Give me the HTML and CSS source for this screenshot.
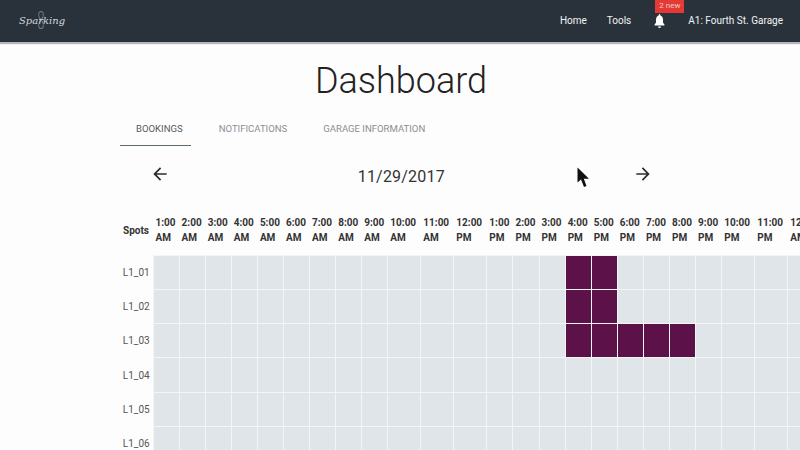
FILE: index.html
```html
<!DOCTYPE html>
<html lang="en">
<head>
  <meta charset="UTF-8" />
  <meta name="viewport" content="width=device-width, initial-scale=1" />
  <title>Sparking Dashboard</title>
  <link rel="stylesheet" href="styles.css">
</head>
<body>

  <nav class="navbar">
    <a class="logo">
      <svg class="logo-loop" width="10" height="20" viewBox="0 0 16 26" fill="none" stroke="#6f7981" stroke-width="1.500" preserveAspectRatio="none">
        <path d="M8 13C3 9 3 2 8 2s5 7 0 11c-5 4-5 11 0 11s5-7 0-11z" />
      </svg>
      <span class="logo-text">Sparking</span>
    </a>
    <div class="nav-links">
      <a class="nav-link">Home</a>
      <a class="nav-link">Tools</a>
      <a class="bell">
        <span class="badge">2 new</span>
        <svg width="13" height="14" viewBox="0 0 24 24" fill="#fff" preserveAspectRatio="none">
          <path d="M12 24c1.500 0 2.800-1.200 2.800-2.600H9.200C9.200 22.800 10.500 24 12 24zm9-6.500-2.500-2.500V9.500c0-3.700-2-6.400-5-7.100V1.500C13.500.6 12.800 0 12 0s-1.500.6-1.500 1.500v.9c-3 .7-5 3.400-5 7.100V15L3 17.500V19.500h18v-2z" />
        </svg>
      </a>
      <a class="nav-link">A1: Fourth St. Garage</a>
    </div>
  </nav>

  <main class="content">
    <h1>Dashboard</h1>

    <div class="tabs">
      <a class="tab active">BOOKINGS</a>
      <a class="tab">NOTIFICATIONS</a>
      <a class="tab">GARAGE INFORMATION</a>
    </div>

    <div class="date-row">
      <svg class="arrow" width="20" height="20" viewBox="0 0 24 24" fill="#2b2b2b"><path d="M20 11H7.830l5.590-5.590L12 4l-8 8 8 8 1.410-1.410L7.830 13H20z" /></svg>
      <span class="date">11/29/2017</span>
      <svg class="arrow" width="20" height="20" viewBox="0 0 24 24" fill="#2b2b2b"><path d="M4 11h12.170l-5.590-5.590L12 4l8 8-8 8-1.410-1.410L16.170 13H4z" /></svg>
    </div>

    <div class="schedule-wrap">
    <table class="schedule">
      <thead>
        <tr>
          <th class="spot">Spots</th>
          <th>1:00<br>AM</th><th>2:00<br>AM</th><th>3:00<br>AM</th><th>4:00<br>AM</th><th>5:00<br>AM</th><th>6:00<br>AM</th>
          <th>7:00<br>AM</th><th>8:00<br>AM</th><th>9:00<br>AM</th><th class="wide">10:00<br>AM</th><th class="wide">11:00<br>AM</th><th class="wide">12:00<br>PM</th>
          <th>1:00<br>PM</th><th>2:00<br>PM</th><th>3:00<br>PM</th><th>4:00<br>PM</th><th>5:00<br>PM</th><th>6:00<br>PM</th>
          <th>7:00<br>PM</th><th>8:00<br>PM</th><th>9:00<br>PM</th><th class="wide">10:00<br>PM</th><th class="wide">11:00<br>PM</th><th class="wide">12:00<br>AM</th>
        </tr>
      </thead>
      <tbody>
        <tr>
          <td class="spot">L1_01</td>
          <td></td><td></td><td></td><td></td><td></td><td></td><td></td><td></td><td></td><td></td><td></td><td></td>
          <td></td><td></td><td></td><td class="booked"></td><td class="booked"></td><td></td><td></td><td></td><td></td><td></td><td></td><td></td>
        </tr>
        <tr>
          <td class="spot">L1_02</td>
          <td></td><td></td><td></td><td></td><td></td><td></td><td></td><td></td><td></td><td></td><td></td><td></td>
          <td></td><td></td><td></td><td class="booked"></td><td class="booked"></td><td></td><td></td><td></td><td></td><td></td><td></td><td></td>
        </tr>
        <tr>
          <td class="spot">L1_03</td>
          <td></td><td></td><td></td><td></td><td></td><td></td><td></td><td></td><td></td><td></td><td></td><td></td>
          <td></td><td></td><td></td><td class="booked"></td><td class="booked"></td><td class="booked"></td><td class="booked"></td><td class="booked"></td><td></td><td></td><td></td><td></td>
        </tr>
        <tr>
          <td class="spot">L1_04</td>
          <td></td><td></td><td></td><td></td><td></td><td></td><td></td><td></td><td></td><td></td><td></td><td></td>
          <td></td><td></td><td></td><td></td><td></td><td></td><td></td><td></td><td></td><td></td><td></td><td></td>
        </tr>
        <tr>
          <td class="spot">L1_05</td>
          <td></td><td></td><td></td><td></td><td></td><td></td><td></td><td></td><td></td><td></td><td></td><td></td>
          <td></td><td></td><td></td><td></td><td></td><td></td><td></td><td></td><td></td><td></td><td></td><td></td>
        </tr>
        <tr>
          <td class="spot">L1_06</td>
          <td></td><td></td><td></td><td></td><td></td><td></td><td></td><td></td><td></td><td></td><td></td><td></td>
          <td></td><td></td><td></td><td></td><td></td><td></td><td></td><td></td><td></td><td></td><td></td><td></td>
        </tr>
      </tbody>
    </table>
    </div>
  </main>

  <svg class="cursor" width="13" height="21" viewBox="0 0 13 21" fill="#111"><path d="M0.500 0.500V15.500L4 12.500L7 20L9.500 19L6.800 11.800H12z" /></svg>

</body>
</html>
```

FILE: styles.css
```css
html, body {
  height: 100%;
}
body {
  margin: 0;
  overflow: hidden;
  background: #fefdfe;
  color: #2b2b2b;
  font-family: Roboto, sans-serif;
}
.navbar {
  height: 42px;
  display: flex;
  align-items: center;
  justify-content: space-between;
  padding: 0 17px 0 19px;
  background: #29323b;
  box-shadow: 0 2px 1px #b4b6ba;
}
.logo {
  position: relative;
  display: flex;
  align-items: center;
}
.logo-loop {
  position: absolute;
  left: 17px;
  top: -5px;
}
.logo-text {
  position: relative;
  margin-bottom: 2px;
  font-family: "DejaVu Serif", serif;
  font-style: italic;
  font-size: 10px;
  color: #d4d8db;
}
.nav-links {
  display: flex;
  align-items: center;
  color: #f2f3f4;
  font-size: 10px;
}
.nav-link {
  margin-left: 20px;
  margin-bottom: 2px;
}
.bell {
  position: relative;
  display: flex;
  margin-left: 22px;
  margin-right: 2px;
}
.badge {
  position: absolute;
  left: 2px;
  top: -15px;
  padding: 0 4px;
  height: 14px;
  line-height: 13px;
  font-size: 8px;
  white-space: nowrap;
  color: #f6c9c4;
  background: #e53935;
}
.content {
  padding-left: 120px;
}
h1 {
  margin: 17px 0 0;
  padding-right: 118px;
  text-align: center;
  font-size: 36px;
  line-height: 44px;
  font-weight: 300;
  color: #222;
}
.tabs {
  display: flex;
  gap: 12px;
  margin-top: 18px;
}
.tab {
  padding: 0 8px 8px 16px;
  line-height: 16px;
  font-size: 9.550px;
  font-weight: 400;
  color: #8b8e92;
}
.tab.active {
  color: #555a60;
  border-bottom: 1.500px solid #5d6a72;
}
.date-row {
  display: flex;
  align-items: center;
  justify-content: space-between;
  width: 502.600px;
  padding: 0 30px;
  margin-top: 18px;
  height: 24px;
}
.arrow {
  margin-bottom: 4px;
}
.date {
  font-size: 16px;
  letter-spacing: 0.200px;
  color: #333;
}
.schedule-wrap {
  overflow: hidden;
  margin-top: 17px;
}
.schedule {
  table-layout: fixed;
  border-collapse: collapse;
  width: 700.800px;
}
.schedule th {
  box-sizing: border-box;
  width: 26.100px;
  height: 50px;
  padding: 0 0 0 2.500px;
  font-size: 10px;
  line-height: 15px;
  font-weight: 700;
  color: #333;
  text-align: left;
}
.schedule th.wide {
  width: 33px;
}
.schedule th.spot {
  width: 33px;
  padding-left: 3px;
}
.schedule td {
  box-sizing: border-box;
  height: 34.300px;
  padding: 0;
  background: #e0e5ea;
  border: 1px solid #f4f5f7;
}
.schedule td.spot {
  background: none;
  border: 0;
  font-size: 10px;
  color: #555;
  text-align: center;
}
.schedule td.booked {
  background: #5c1149;
}
.cursor {
  position: absolute;
  left: 577px;
  top: 167px;
}
```
